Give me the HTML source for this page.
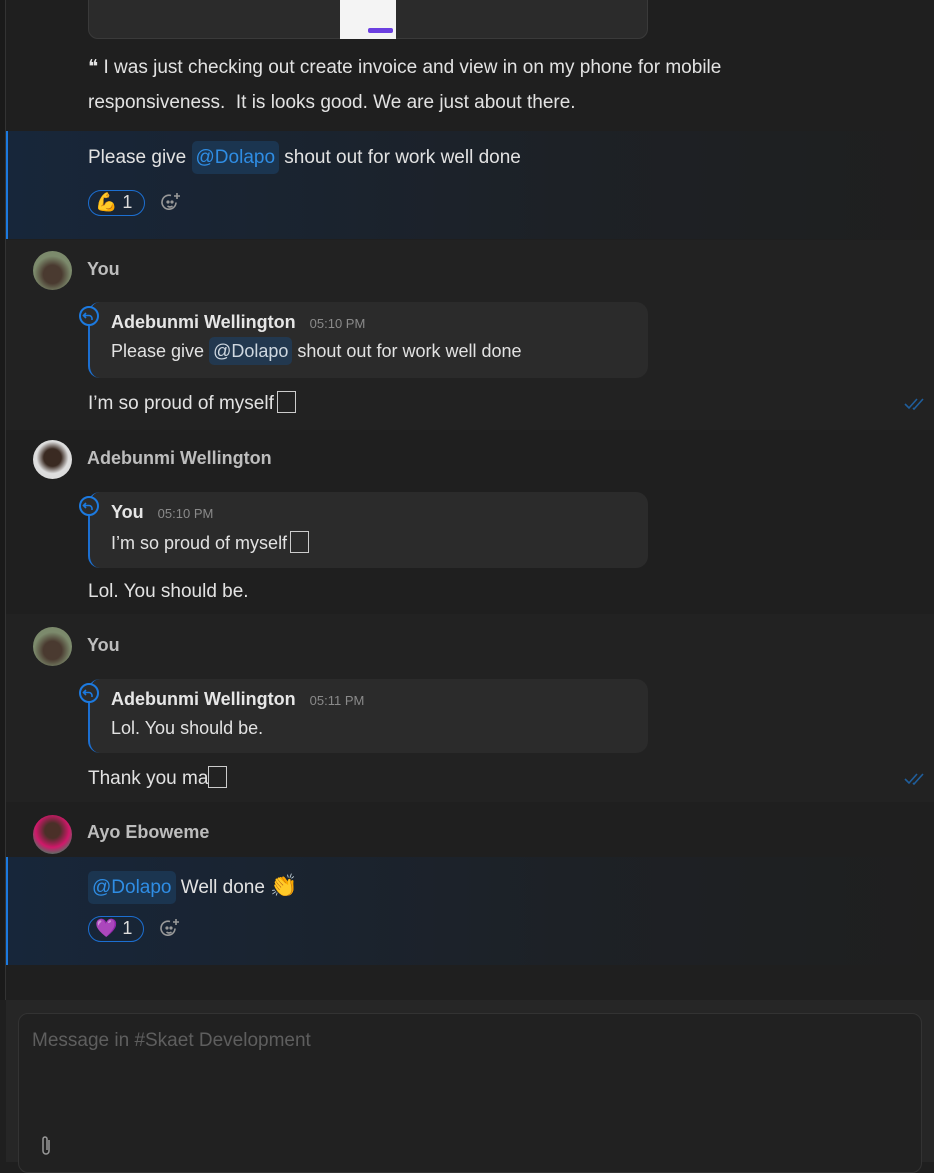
<!DOCTYPE html>
<html><head><meta charset="utf-8"><style>
*{box-sizing:border-box;margin:0;padding:0}
body{width:934px;height:1162px;overflow:hidden;background:#1f1f1f;font-family:"Liberation Sans",sans-serif;color:#e0e0e0;position:relative}
.abs{position:absolute}
.leftline{left:5px;top:0;width:1px;height:1000px;background:#333}
.t{position:absolute;font-size:19px;color:#e2e2e2;white-space:nowrap}
.name{position:absolute;font-size:18px;font-weight:bold;color:#bdbdbd}
.mention{background:#1b3550;color:#2f8de4;border-radius:5px;padding:6px 4px}
.qbox{position:absolute;left:88px;width:560px;background:#2b2b2b;border-radius:12px;border-left:2px solid #1c6fd1}
.qn{position:absolute;left:21px;top:10px;font-size:18px;font-weight:bold;color:#e6e6e6}
.qtime{font-size:13px;color:#8a8a8a;font-weight:normal;margin-left:14px}
.qt{position:absolute;left:21px;top:39px;font-size:18px;color:#e2e2e2;white-space:nowrap}
.ricon{position:absolute;left:-11px;top:4px;width:20px;height:20px;border-radius:50%;border:2px solid #1c7ae0;background:#2b2b2b}
.av{position:absolute;left:33px;width:39px;height:39px;border-radius:50%}
.react{position:absolute;height:26px;border:1.5px solid #1c6fd1;border-radius:14px;font-size:18px;color:#ddd;padding:0 6px;line-height:23px}
.box{display:inline-block;width:19px;height:22px;border:1.5px solid #ccc;vertical-align:-4px;margin-left:3px}
.check{position:absolute;left:904px}
.sm{position:absolute}
</style></head><body>
<div class="abs" style="left:0;top:0;width:5px;height:1000px;background:#1a1a1a"></div>
<div class="abs leftline"></div>
<div class="abs" style="left:88px;top:-10px;width:560px;height:49px;background:#2b2b2b;border:1px solid #3a3a3a;border-radius:10px"></div>
<div class="abs" style="left:340px;top:0;width:56px;height:39px;background:#f4f4f4"></div>
<div class="abs" style="left:368px;top:28px;width:25px;height:5px;background:#6b3fe0;border-radius:2px"></div>
<div class="t" style="left:88px;top:56px">❝ I was just checking out create invoice and view in on my phone for mobile</div>
<div class="t" style="left:88px;top:92px">responsiveness.&nbsp; It is looks good. We are just about there.</div>
<div class="abs" style="left:6px;top:131px;width:928px;height:108px;background:linear-gradient(90deg,#17263a,#1d2126 60%,#1f1f1f)"></div>
<div class="abs" style="left:6px;top:131px;width:2px;height:108px;background:#1c7ae0"></div>
<div class="t" style="left:88px;top:147px">Please give <span class="mention">@Dolapo</span> shout out for work well done</div>
<div class="react" style="left:88px;top:190px;width:57px">💪 1</div>
<svg class="sm" style="left:159px;top:191px" width="24" height="24" viewBox="0 0 24 24" fill="none" stroke="#999" stroke-width="1.6"><path d="M17 11.5a7 7 0 1 1-5-7"/><circle cx="9" cy="11" r=".8" fill="#999"/><circle cx="13" cy="11" r=".8" fill="#999"/><path d="M8.5 15q2.5 2 5 0M18 2v6M15 5h6"/></svg>
<div class="abs" style="left:6px;top:240px;width:928px;height:190px;background:#222"></div>
<div class="av" style="top:251px;background:radial-gradient(circle at 50% 60%,#4a3a30 30%,#7c8a6c 60%)"></div>
<div class="name" style="left:87px;top:259px">You</div>
<div class="qbox" style="top:302px;height:76px"><div class="ricon"><svg width="16" height="16" viewBox="0 0 16 16" fill="none" stroke="#1c7ae0" stroke-width="1.6"><path d="M5 5l-2.5 2.5L5 10M3 7.5h5a3 3 0 0 1 3 3V12"/></svg></div><div class="qn">Adebunmi Wellington<span class="qtime">05:10 PM</span></div><div class="qt">Please give <span class="mention" style="background:#22384f;color:#cfd8e0;padding:4px 4px">@Dolapo</span> shout out for work well done</div></div>
<div class="t" style="left:88px;top:391px">I’m so proud of myself<span class="box"></span></div>
<svg class="check" style="top:398px" width="22" height="12" viewBox="0 0 22 12" fill="none" stroke="#1f5e9c" stroke-width="1.6"><path d="M1 6l4 4 8-9M9 10l1 1 9-10"/></svg>
<div class="av" style="top:440px;background:radial-gradient(circle at 50% 45%,#3a2a22 30%,#ddd 55%)"></div>
<div class="name" style="left:87px;top:448px">Adebunmi Wellington</div>
<div class="qbox" style="top:492px;height:76px"><div class="ricon"><svg width="16" height="16" viewBox="0 0 16 16" fill="none" stroke="#1c7ae0" stroke-width="1.6"><path d="M5 5l-2.5 2.5L5 10M3 7.5h5a3 3 0 0 1 3 3V12"/></svg></div><div class="qn">You<span class="qtime">05:10 PM</span></div><div class="qt">I’m so proud of myself<span class="box"></span></div></div>
<div class="t" style="left:88px;top:581px">Lol. You should be.</div>
<div class="abs" style="left:6px;top:614px;width:928px;height:188px;background:#222"></div>
<div class="av" style="top:627px;background:radial-gradient(circle at 50% 60%,#4a3a30 30%,#7c8a6c 60%)"></div>
<div class="name" style="left:87px;top:635px">You</div>
<div class="qbox" style="top:679px;height:74px"><div class="ricon"><svg width="16" height="16" viewBox="0 0 16 16" fill="none" stroke="#1c7ae0" stroke-width="1.6"><path d="M5 5l-2.5 2.5L5 10M3 7.5h5a3 3 0 0 1 3 3V12"/></svg></div><div class="qn">Adebunmi Wellington<span class="qtime">05:11 PM</span></div><div class="qt">Lol. You should be.</div></div>
<div class="t" style="left:88px;top:766px">Thank you ma<span class="box" style="margin-left:0"></span></div>
<svg class="check" style="top:773px" width="22" height="12" viewBox="0 0 22 12" fill="none" stroke="#1f5e9c" stroke-width="1.6"><path d="M1 6l4 4 8-9M9 10l1 1 9-10"/></svg>
<div class="av" style="top:815px;background:radial-gradient(circle at 50% 40%,#4a3028 25%,#d0186a 55%,#666 75%)"></div>
<div class="name" style="left:87px;top:822px">Ayo Eboweme</div>
<div class="abs" style="left:6px;top:857px;width:928px;height:108px;background:linear-gradient(90deg,#17263a,#1d2126 60%,#1f1f1f)"></div>
<div class="abs" style="left:6px;top:857px;width:2px;height:108px;background:#1c7ae0"></div>
<div class="t" style="left:88px;top:873px"><span class="mention">@Dolapo</span> Well done <span style="font-size:22px">👏</span></div>
<div class="react" style="left:88px;top:916px;width:56px">💜 1</div>
<svg class="sm" style="left:158px;top:917px" width="24" height="24" viewBox="0 0 24 24" fill="none" stroke="#999" stroke-width="1.6"><path d="M17 11.5a7 7 0 1 1-5-7"/><circle cx="9" cy="11" r=".8" fill="#999"/><circle cx="13" cy="11" r=".8" fill="#999"/><path d="M8.5 15q2.5 2 5 0M18 2v6M15 5h6"/></svg>
<div class="abs" style="left:6px;top:1000px;width:928px;height:162px;background:#262626"></div>
<div class="abs" style="left:18px;top:1013px;width:904px;height:160px;background:#212121;border:1px solid #333;border-radius:10px"></div>
<div class="abs" style="left:32px;top:1030px;font-size:19px;color:#5e5e5e">Message in #Skaet Development</div>
<svg class="abs" style="left:40px;top:1135px" width="12" height="22" viewBox="0 0 12 22" fill="none" stroke="#999" stroke-width="1.5"><path d="M9 5v11a3 3 0 0 1-6 0V4a2 2 0 0 1 4 0v11"/></svg>
</body></html>
